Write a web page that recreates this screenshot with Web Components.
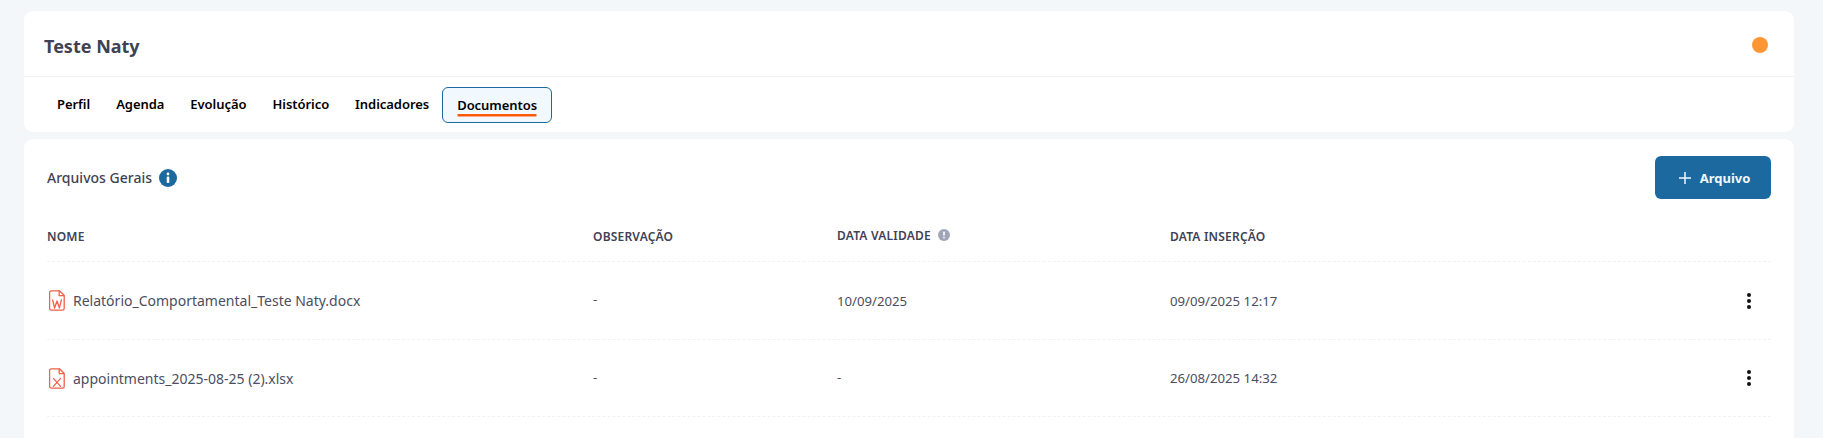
<!DOCTYPE html>
<html lang="pt">
<head>
<meta charset="utf-8">
<title>Documentos</title>
<style>
  html, body { margin: 0; height: 100%; }
  body { background: #f3f7fa; font-family: "Noto Sans", sans-serif; color: #3f4254; overflow: hidden; }
</style>
</head>
<body>
<patient-page>
  <patient-header name="Teste Naty">
    <tab-item>Perfil</tab-item>
    <tab-item>Agenda</tab-item>
    <tab-item>Evolução</tab-item>
    <tab-item>Histórico</tab-item>
    <tab-item>Indicadores</tab-item>
    <tab-item active>Documentos</tab-item>
  </patient-header>
  <docs-panel heading="Arquivos Gerais">
    <doc-row type="w" name="Relatório_Comportamental_Teste Naty.docx" note="-" valid="10/09/2025" added="09/09/2025 12:17"></doc-row>
    <doc-row type="x" name="appointments_2025-08-25 (2).xlsx" note="-" valid="-" added="26/08/2025 14:32"></doc-row>
  </docs-panel>
</patient-page>

<script>
// page shell
class PatientPage extends HTMLElement {
    constructor() {
        super();
        this.attachShadow({ mode: 'open' });
        this.shadowRoot.innerHTML = `
            <style>
                :host { display: flex; flex-direction: column; gap: 7px; padding: 11px 29px 0 24px; }
            </style>
            <slot></slot>
        `;
    }
}

class PatientHeader extends HTMLElement {
    constructor() {
        super();
        this.attachShadow({ mode: 'open' });
    }

    connectedCallback() {
        this.shadowRoot.innerHTML = `
            <style>
                :host { display: block; background: #fff; border-radius: 9px; height: 121px; }
                .top {
                    display: flex; justify-content: space-between; align-items: center;
                    height: 65px; padding: 0 26px 0 20px;
                    border-bottom: 1px solid #f1f2f5;
                }
                h1 { margin: 4px 0 0; font-size: 18px; font-weight: 700; color: #3f4254; }
                .dot { width: 16px; height: 16px; border-radius: 50%; background: #ff9636; margin-top: 2px; }
                nav { display: flex; align-items: center; padding: 10px 0 0 20px; }
            </style>
            <div class="top">
                <h1>${this.getAttribute('name')}</h1>
                <span class="dot"></span>
            </div>
            <nav><slot></slot></nav>
        `;
    }
}

class TabItem extends HTMLElement {
    constructor() {
        super();
        this.attachShadow({ mode: 'open' });
    }

    connectedCallback() {
        this.shadowRoot.innerHTML = `
            <style>
                :host {
                    display: flex; align-items: center; box-sizing: border-box;
                    height: 36px; padding: 0 12px 3px;
                    font-size: 13px; font-weight: 600; color: #000; letter-spacing: -.05px;
                    border: 1px solid transparent; border-radius: 6px;
                    white-space: nowrap;
                }
                :host([active]) { background: #f1f9ff; border-color: #1c699f; padding: 1px 14px 0; }
                :host([active]) span { box-shadow: 0 3px 0 -0.5px #ff5a0a; line-height: 17px; }
            </style>
            <span><slot></slot></span>
        `;
    }
}

class DocsPanel extends HTMLElement {
    constructor() {
        super();
        this.attachShadow({ mode: 'open' });
    }

    connectedCallback() {
        this.shadowRoot.innerHTML = `
            <style>
                :host { display: block; background: #fff; border-radius: 9px 9px 0 0; padding: 17px 23px 0; height: 299px; box-sizing: border-box; }
                .head { display: flex; justify-content: space-between; align-items: center; height: 43px; }
                .title { display: flex; align-items: center; gap: 7px; font-size: 14px; font-weight: 500; color: #3f4254; letter-spacing: .02px; }
                button {
                    display: flex; align-items: center; justify-content: center; gap: 8px;
                    width: 116px; height: 43px; padding: 0 0 0 2px;
                    background: #1c699f; color: #f1f6fb; border: 0; border-radius: 6px;
                    font: 700 13px "Noto Sans", sans-serif;
                }
                .cols {
                    display: grid; grid-template-columns: 546px 244px 333px 1fr;
                    align-items: center; height: 63px; padding-top: 12px; box-sizing: border-box;
                    border-bottom: 1px dashed #f1f2f5;
                    font-size: 12px; font-weight: 600; color: #3f4254; letter-spacing: .2px;
                }
                .cols span { display: flex; align-items: center; gap: 7px; }
                .cols span.raised { margin-top: -2px; }
            </style>
            <div class="head">
                <div class="title">
                    ${this.getAttribute('heading')}
                    <svg width="18" height="18" viewBox="0 0 18 18">
                        <circle cx="9" cy="9" r="9" fill="#1c699f"/>
                        <circle cx="9" cy="5" r="1.4" fill="#fff"/>
                        <rect x="7.7" y="7.5" width="2.6" height="6.5" rx="1" fill="#fff"/>
                    </svg>
                </div>
                <button>
                    <svg width="14" height="14" viewBox="0 0 14 14"><path d="M7 1v12M1 7h12" stroke="#f1f6fb" stroke-width="1.5" fill="none"/></svg>
                    Arquivo
                </button>
            </div>
            <div class="cols">
                <span>NOME</span>
                <span>OBSERVAÇÃO</span>
                <span class="raised">DATA VALIDADE
                    <svg width="12" height="12" viewBox="0 0 12 12">
                        <circle cx="6" cy="6" r="6" fill="#a1a5b7"/>
                        <rect x="5.2" y="2.6" width="1.6" height="4.2" rx=".7" fill="#fff"/>
                        <circle cx="6" cy="8.6" r=".9" fill="#fff"/>
                    </svg>
                </span>
                <span>DATA INSERÇÃO</span>
            </div>
            <slot></slot>
        `;
    }
}

class DocRow extends HTMLElement {
    constructor() {
        super();
        this.attachShadow({ mode: 'open' });
    }

    fileIcon(type) {
        const mark = type === 'w'
            ? '<path d="M3.6 9.8l2 8.2 2.4-7 2.4 7 2-8.2" />'
            : '<path d="M4.4 10.4l7.2 8M11.6 10.4l-7.2 8" />';
        return `
            <svg width="16" height="21" viewBox="0 0 16 21" fill="none" stroke="#f4604c" stroke-width="1.3" stroke-linejoin="round" stroke-linecap="round">
                <path d="M2.2.8h8.3l4.7 4.7v12.9a1.8 1.8 0 0 1-1.8 1.8H2.2a1.8 1.8 0 0 1-1.6-1.8V2.6A1.8 1.8 0 0 1 2.2.8z"/>
                <path d="M10.2 1v4.6h4.8"/>
                ${mark}
            </svg>
        `;
    }

    connectedCallback() {
        this.shadowRoot.innerHTML = `
            <style>
                :host {
                    display: grid; grid-template-columns: 546px 244px 333px 1fr;
                    align-items: center; height: 77.5px; padding-top: 1px; box-sizing: border-box;
                    border-bottom: 1px dashed #f1f2f5;
                    font-size: 13.2px; color: #4b4e60;
                }
                .name { display: flex; align-items: center; gap: 8px; font-size: 14px; padding-left: 2px; }
                .more { display: flex; justify-content: space-between; align-items: center; }
                .kebab { display: flex; flex-direction: column; gap: 2px; margin-right: 20px; }
                .kebab i { width: 4px; height: 4px; border-radius: 50%; background: #111; }
                .note { margin-top: -3px; }
            </style>
            <div class="name">${this.fileIcon(this.getAttribute('type'))}<span>${this.getAttribute('name')}</span></div>
            <div class="note">${this.getAttribute('note')}</div>
            <div class="${this.getAttribute('valid') === '-' ? 'note' : ''}">${this.getAttribute('valid')}</div>
            <div class="more">
                <span>${this.getAttribute('added')}</span>
                <span class="kebab"><i></i><i></i><i></i></span>
            </div>
        `;
    }
}

customElements.define('patient-page', PatientPage);
customElements.define('patient-header', PatientHeader);
customElements.define('tab-item', TabItem);
customElements.define('docs-panel', DocsPanel);
customElements.define('doc-row', DocRow);
</script>
</body>
</html>
